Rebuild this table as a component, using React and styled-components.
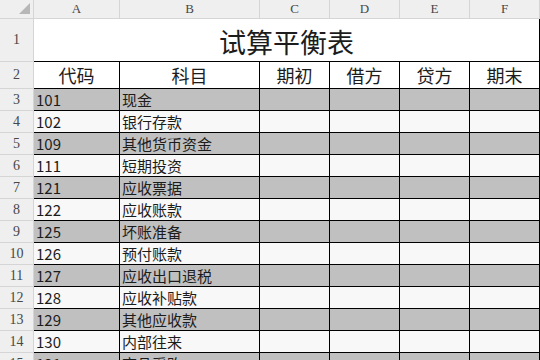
import React from "react";
import styled, { createGlobalStyle } from "styled-components";

const Global = createGlobalStyle`
  html, body { margin: 0; padding: 0; background: #ffffff; }
  body { width: 540px; height: 360px; overflow: hidden; }
`;

const Sheet = styled.div`
  display: grid;
  grid-template-columns: 34px 86px 140px 70px 70px 70px 70px 1fr;
  grid-template-rows: 19px 43px 27px repeat(13, 22px);
  width: 540px;
  height: 360px;
  overflow: hidden;
  font-family: "Noto Sans CJK SC", "Noto Sans", sans-serif;
  color: #1f1f1f;
  background: #ffffff;
`;

const Corner = styled.div`
  position: relative;
  background: #efefef;
  border-right: 1px solid #d5d5d5;
  border-bottom: 1px solid #d5d5d5;
  box-sizing: border-box;
`;

const CornerMark = styled.svg`
  position: absolute;
  right: 3px;
  bottom: 4px;
`;

const ColHead = styled.div`
  display: flex;
  align-items: center;
  justify-content: center;
  background: #efefef;
  border-right: 1px solid #d5d5d5;
  border-bottom: 1px solid #d5d5d5;
  box-sizing: border-box;
  font-family: "Liberation Serif", "DejaVu Serif", serif;
  font-size: 13px;
  color: #474747;
`;

const RowHead = styled.div`
  display: flex;
  align-items: center;
  justify-content: center;
  background: #efefef;
  border-right: 1px solid #d5d5d5;
  border-bottom: 1px solid #d5d5d5;
  box-sizing: border-box;
  font-family: "Liberation Serif", "DejaVu Serif", serif;
  font-size: 14px;
  color: #474747;
`;

const TitleCell = styled.div`
  grid-column: span 6;
  display: flex;
  align-items: center;
  justify-content: center;
  border-right: 1px solid #000;
  border-bottom: 1px solid #000;
  box-sizing: border-box;
  font-size: 27px;
  line-height: 1;
  color: #1c1c1c;
  padding-top: 2px;
`;

const HeadCell = styled.div`
  display: flex;
  align-items: center;
  justify-content: center;
  background: #ffffff;
  border-right: 1px solid #000;
  border-bottom: 1px solid #000;
  box-sizing: border-box;
  font-size: 18px;
  line-height: 1;
  color: #1c1c1c;
`;

const Cell = styled.div`
  display: flex;
  align-items: center;
  padding-left: 2px;
  background: ${(p) => (p.$shade ? "#c0c0c0" : "#f8f8f8")};
  border-right: 1px solid #000;
  border-bottom: 1px solid #000;
  box-sizing: border-box;
  font-size: 15px;
  line-height: 1;
  color: #1c1c1c;
  white-space: nowrap;
  overflow: hidden;
`;

const Blank = styled.div`
  background: #ffffff;
`;

const cols = ["A", "B", "C", "D", "E", "F"];
const heads = ["代码", "科目", "期初", "借方", "贷方", "期末"];
const rows = [
  ["101", "现金"],
  ["102", "银行存款"],
  ["109", "其他货币资金"],
  ["111", "短期投资"],
  ["121", "应收票据"],
  ["122", "应收账款"],
  ["125", "坏账准备"],
  ["126", "预付账款"],
  ["127", "应收出口退税"],
  ["128", "应收补贴款"],
  ["129", "其他应收款"],
  ["130", "内部往来"],
  ["131", "商品采购"],
];

export default function App() {
  return (
    <>
      <Global />
      <Sheet>
        <Corner>
          <CornerMark width="11" height="11" viewBox="0 0 11 11">
            <polygon points="11,0 11,11 0,11" fill="#b7b7b7" />
          </CornerMark>
        </Corner>
        {cols.map((c) => (
          <ColHead key={c}>{c}</ColHead>
        ))}
        <Blank />

        <RowHead>1</RowHead>
        <TitleCell>试算平衡表</TitleCell>
        <Blank />

        <RowHead>2</RowHead>
        {heads.map((h) => (
          <HeadCell key={h}>{h}</HeadCell>
        ))}
        <Blank />

        {rows.map(([code, name], i) => {
          const shade = i % 2 === 0;
          return (
            <React.Fragment key={code}>
              <RowHead>{i + 3}</RowHead>
              <Cell $shade={shade}>{code}</Cell>
              <Cell $shade={shade}>{name}</Cell>
              <Cell $shade={shade} />
              <Cell $shade={shade} />
              <Cell $shade={shade} />
              <Cell $shade={shade} />
              <Blank />
            </React.Fragment>
          );
        })}
      </Sheet>
    </>
  );
}
